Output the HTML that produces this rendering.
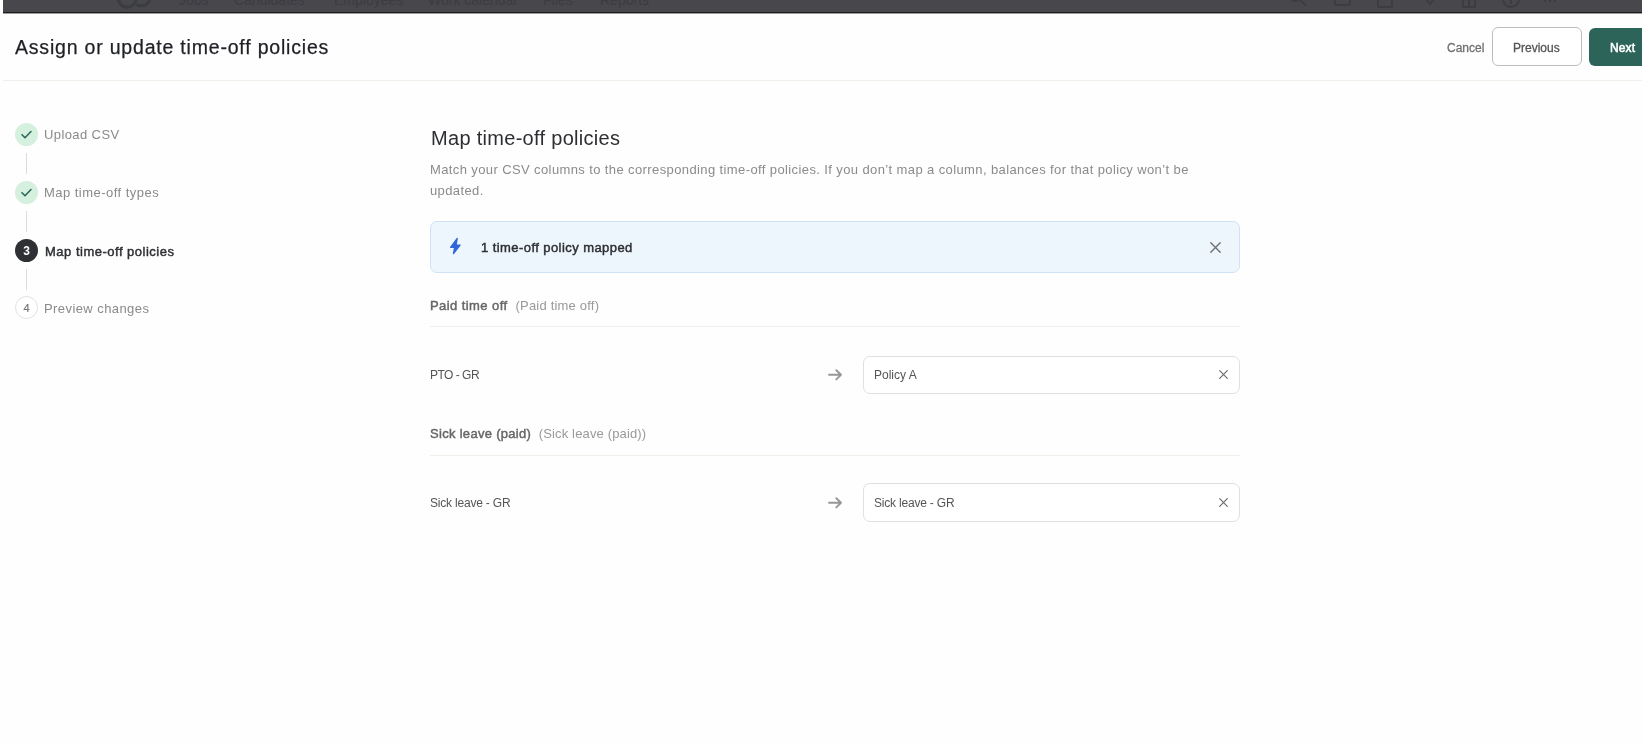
<!DOCTYPE html>
<html>
<head>
<meta charset="utf-8">
<style>
*{box-sizing:border-box;margin:0;padding:0}
html,body{width:1642px;height:744px;overflow:hidden;background:#fefefe;font-family:"Liberation Sans",sans-serif;-webkit-font-smoothing:antialiased}
.abs{will-change:transform}
.abs{position:absolute;white-space:nowrap}
#topbar{position:absolute;left:3px;top:0;width:1639px;height:13px;background:#48474c;border-bottom:1px solid #1c1c1e;overflow:hidden;box-shadow:0 1px 0 rgba(0,0,0,.38)}
#nav span{position:absolute;top:-8px;font-size:14px;line-height:16px;color:#3d3c41;white-space:nowrap}
#hdrline{position:absolute;left:3px;top:80px;width:1639px;height:1px;background:#f0efea}
.title{left:15px;top:35px;font-size:19.5px;line-height:24px;color:#1f2025;letter-spacing:.8px;-webkit-text-stroke:.25px #1f2025}
.cancel{left:1447px;top:40.5px;font-size:12px;line-height:14px;color:#707070;-webkit-text-stroke:.3px #707070}
.prev{position:absolute;left:1492px;top:27px;width:90px;height:39px;border:1px solid #bdbdbd;border-radius:6px;background:#fff}
.prevt{left:1513px;top:40.5px;font-size:12px;line-height:14px;color:#555;-webkit-text-stroke:.3px #555}
.next{position:absolute;left:1589px;top:28px;width:60px;height:38px;border-radius:6px;background:#2c645a}
.nextt{left:1610px;top:40.5px;font-size:12px;line-height:14px;color:#fff;-webkit-text-stroke:.55px #fff;letter-spacing:.1px}
.circ{position:absolute;width:23px;height:23px;border-radius:50%;will-change:transform}
.done{background:#d5f0de}
.vline{position:absolute;left:26px;width:1px;height:21px;background:#dcdcdc}
.step{left:44px;font-size:13px;line-height:16px;color:#8a8a8a}
.h2{left:430.5px;top:127px;font-size:20px;line-height:22px;color:#2e2f33;letter-spacing:.3px}
.para{left:430px;top:159px;font-size:13px;line-height:21px;color:#8b8b8b;letter-spacing:.39px}
#banner{position:absolute;left:430px;top:221px;width:810px;height:52px;background:#eef6fd;border:1px solid #cfe2f8;border-radius:7px}
.bt{left:481px;top:240px;font-size:13px;line-height:16px;color:#2e2f33;-webkit-text-stroke:.45px #2e2f33;letter-spacing:.43px}
.sec{left:430px;font-size:13px;line-height:16px;color:#666}
.sec b{font-weight:400;-webkit-text-stroke:.45px #666}
.sec span{font-weight:400;color:#999;margin-left:8px;letter-spacing:.2px}
.sep{position:absolute;left:430px;width:810px;height:1px;background:#f0efea}
.row{left:430px;font-size:12px;line-height:14px;color:#555}
.inp{position:absolute;left:863px;width:377px;height:39px;border:1px solid #e0e0e0;border-radius:7px;background:#fff}
.it{left:874px;font-size:12px;line-height:14px;color:#555}
svg{position:absolute;overflow:visible}
</style>
</head>
<body>
<div id="topbar"><div id="nav">
<span style="left:176px">Jobs</span><span style="left:231px">Candidates</span><span style="left:331px">Employees</span><span style="left:425px">Work calendar</span><span style="left:540px">Files</span><span style="left:597px">Reports</span>
</div>
<svg style="left:108px;top:-14px" width="44" height="26" viewBox="0 0 44 26"><circle cx="16.2" cy="12.3" r="8.8" fill="none" stroke="#3b3d41" stroke-width="3.2"/><path d="M39.2 0 V11 A8.8 8.8 0 0 1 26.7 19" fill="none" stroke="#3b3d41" stroke-width="3.2" stroke-linecap="round"/></svg>
<svg style="left:1280px;top:-10px" width="290" height="22" viewBox="0 0 290 22" fill="none" stroke="#3d3c41" stroke-width="2">
<circle cx="12" cy="5" r="6"/><path d="M17 10 L23 15.5"/>
<rect x="52" y="4" width="15" height="11" rx="2"/>
<rect x="95" y="2" width="14" height="15" rx="1.5"/>
<path d="M139 4 L147 14 L155 4"/>
<rect x="180" y="3" width="12" height="14"/><path d="M186 3 V17"/>
<circle cx="228" cy="9" r="8"/><path d="M228 10 V14"/>
<path d="M262 6 V12 M267 6 V12 M272 6 V12"/>
</svg>
</div>
<div class="abs title">Assign or update time-off policies</div>
<div class="abs cancel">Cancel</div>
<div class="prev"></div>
<div class="abs prevt">Previous</div>
<div class="next"></div>
<div class="abs nextt">Next</div>
<div id="hdrline"></div>

<!-- stepper -->
<div class="circ done" style="left:15px;top:123px"></div>
<svg style="left:15px;top:123px" width="23" height="23" viewBox="0 0 23 23"><path d="M7 11.8 L10 14.8 L16 8.5" fill="none" stroke="#2e6a5c" stroke-width="1.6" stroke-linecap="round" stroke-linejoin="round"/></svg>
<div class="abs step" style="top:127px;letter-spacing:.4px">Upload CSV</div>
<div class="vline" style="top:153px"></div>
<div class="circ done" style="left:15px;top:181px"></div>
<svg style="left:15px;top:181px" width="23" height="23" viewBox="0 0 23 23"><path d="M7 11.8 L10 14.8 L16 8.5" fill="none" stroke="#2e6a5c" stroke-width="1.6" stroke-linecap="round" stroke-linejoin="round"/></svg>
<div class="abs step" style="top:185px;letter-spacing:.47px">Map time-off types</div>
<div class="vline" style="top:211px"></div>
<div class="circ" style="left:15px;top:239px;background:#2f3033;color:#fff;font-size:12px;font-weight:700;line-height:25px;text-align:center">3</div>
<div class="abs step" style="left:45px;top:244px;color:#2f3033;-webkit-text-stroke:.45px #2f3033;letter-spacing:.5px">Map time-off policies</div>
<div class="vline" style="top:269px"></div>
<div class="circ" style="left:15px;top:296px;border:1px solid #e0e0e0;background:#fff;color:#777;font-size:11px;line-height:22px;text-align:center;-webkit-text-stroke:.2px #777">4</div>
<div class="abs step" style="top:301px;letter-spacing:.42px">Preview changes</div>

<!-- main -->
<div class="abs h2">Map time-off policies</div>
<div class="abs para">Match your CSV columns to the corresponding time-off policies. If you don&#8217;t map a column, balances for that policy won&#8217;t be<br>updated.</div>
<div id="banner"></div>
<svg style="left:449px;top:237px" width="12" height="18" viewBox="0 0 12 18"><path d="M8.2 1.3 L1.6 10.3 L5.6 10.3 L4.5 16.6 L11.1 8.1 L7.1 8.1 Z" fill="#3066d6" stroke="#3066d6" stroke-width="1.3" stroke-linejoin="round"/></svg>
<div class="abs bt">1 time-off policy mapped</div>
<svg style="left:1210px;top:241.5px" width="11" height="11" viewBox="0 0 11 11"><path d="M0.8 0.8 L10.2 10.2 M10.2 0.8 L0.8 10.2" stroke="#6e6e6e" stroke-width="1.35" stroke-linecap="round"/></svg>

<div class="abs sec" style="top:298px"><b style="letter-spacing:.42px">Paid time off</b><span>(Paid time off)</span></div>
<div class="sep" style="top:326px"></div>
<div class="abs row" style="top:368px;letter-spacing:-.5px">PTO - GR</div>
<svg style="left:828px;top:369px" width="14" height="11" viewBox="0 0 14 11"><path d="M1 5.8 L13 5.8 M8.3 1.2 L13 5.8 L8.3 10.4" fill="none" stroke="#979797" stroke-width="1.9" stroke-linecap="round" stroke-linejoin="round"/></svg>
<div class="inp" style="top:356px;height:38px"></div>
<div class="abs it" style="top:368px">Policy A</div>
<svg style="left:1219px;top:370px" width="9" height="9" viewBox="0 0 9 9"><path d="M0.7 0.7 L8.3 8.3 M8.3 0.7 L0.7 8.3" stroke="#6e6e6e" stroke-width="1.2" stroke-linecap="round"/></svg>

<div class="abs sec" style="top:426px"><b style="letter-spacing:.3px">Sick leave (paid)</b><span style="margin-left:7.5px;letter-spacing:.15px">(Sick leave (paid))</span></div>
<div class="sep" style="top:455px"></div>
<div class="abs row" style="top:496px;letter-spacing:-.2px">Sick leave - GR</div>
<svg style="left:828px;top:497px" width="14" height="11" viewBox="0 0 14 11"><path d="M1 5.8 L13 5.8 M8.3 1.2 L13 5.8 L8.3 10.4" fill="none" stroke="#979797" stroke-width="1.9" stroke-linecap="round" stroke-linejoin="round"/></svg>
<div class="inp" style="top:483px"></div>
<div class="abs it" style="top:496px;letter-spacing:-.2px">Sick leave - GR</div>
<svg style="left:1219px;top:498px" width="9" height="9" viewBox="0 0 9 9"><path d="M0.7 0.7 L8.3 8.3 M8.3 0.7 L0.7 8.3" stroke="#6e6e6e" stroke-width="1.2" stroke-linecap="round"/></svg>
</body>
</html>
